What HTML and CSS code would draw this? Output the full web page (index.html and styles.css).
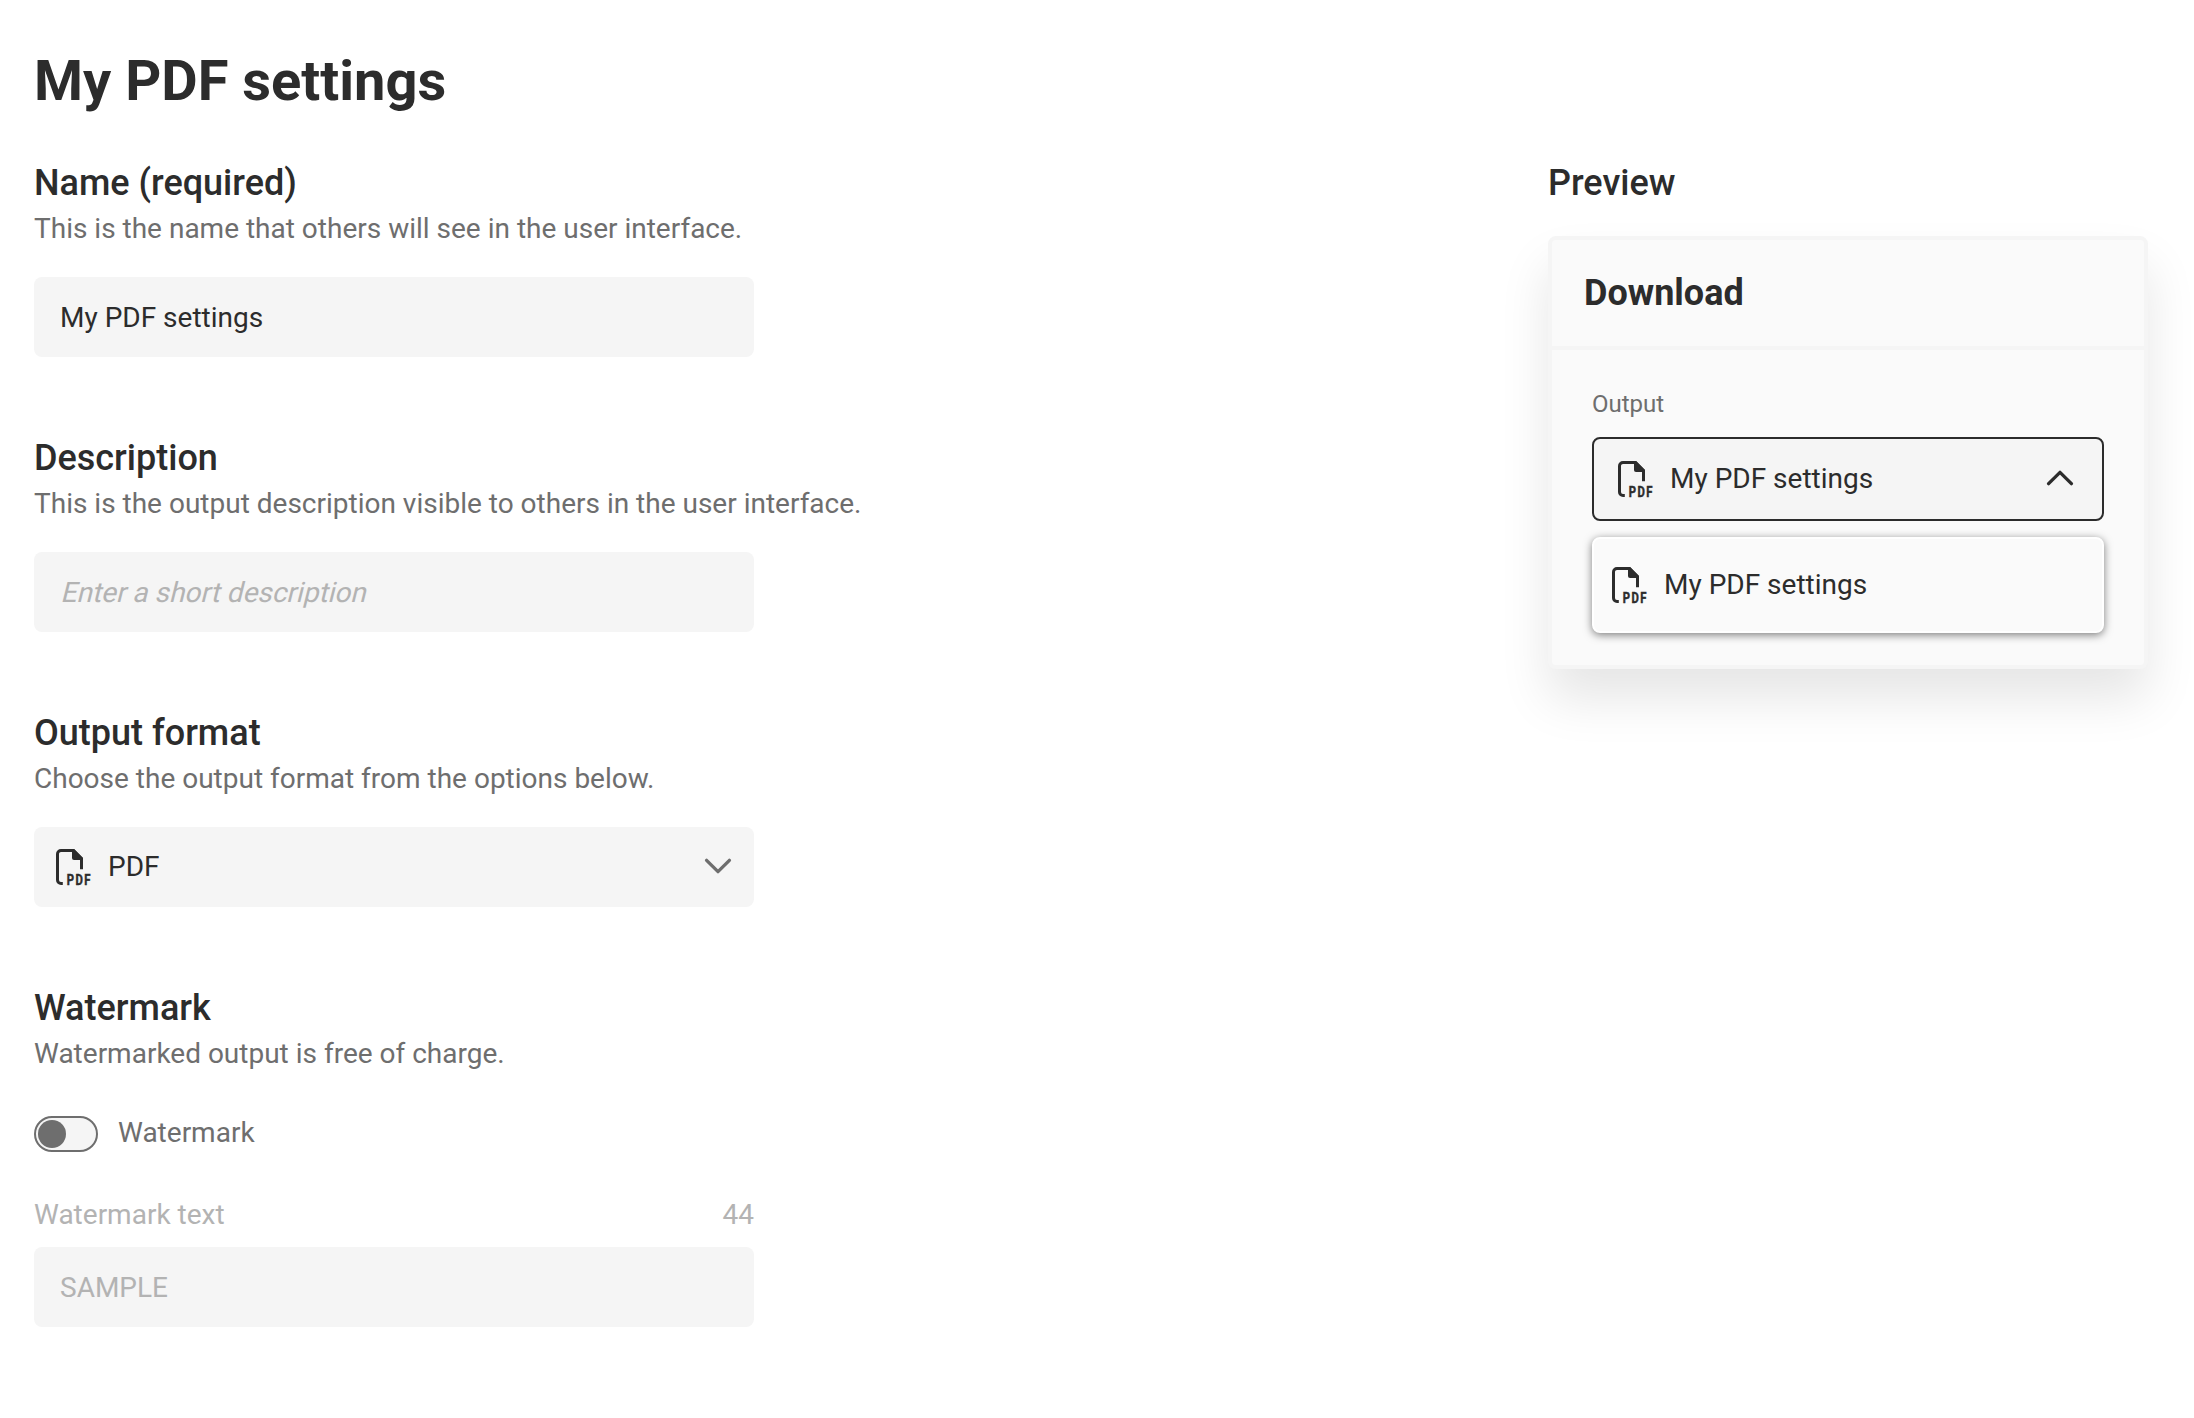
FILE: index.html
```html
<!DOCTYPE html>
<html lang="en">
<head>
<meta charset="utf-8">
<title>My PDF settings</title>
<link rel="stylesheet" href="styles.css">
</head>
<body>
<main class="page">
  <h1 class="page-title">My PDF settings</h1>
  <div class="columns">
    <form class="settings">
      <section class="section">
        <h2 class="section-title">Name (required)</h2>
        <p class="section-hint">This is the name that others will see in the user interface.</p>
        <input class="field" type="text" value="My PDF settings">
      </section>
      <section class="section">
        <h2 class="section-title">Description</h2>
        <p class="section-hint">This is the output description visible to others in the user interface.</p>
        <div class="field field-empty" role="textbox"><span class="field-placeholder">Enter a short description</span></div>
      </section>
      <section class="section">
        <h2 class="section-title">Output format</h2>
        <p class="section-hint">Choose the output format from the options below.</p>
        <div class="select">
          <svg class="icon" viewBox="0 0 36 36">
            <path class="icon-line" d="M6.800 34.500H5A3.500 3.500 0 0 1 1.500 31V5A3.500 3.500 0 0 1 5 1.500H17.500L25.500 9.500V20.300"/>
            <path class="icon-fold" d="M16 0H18L27 9V11H18A2 2 0 0 1 16 9Z"/>
            <text class="icon-text" x="10.800" y="35.800" textLength="25.200" lengthAdjust="spacingAndGlyphs">PDF</text>
          </svg>
          <span class="select-label">PDF</span>
          <svg class="chevron" viewBox="0 0 28 16"><path d="M2.600 2.300L14 13.700L25.400 2.300"/></svg>
        </div>
      </section>
      <section class="section">
        <h2 class="section-title">Watermark</h2>
        <p class="section-hint">Watermarked output is free of charge.</p>
        <div class="toggle-row">
          <span class="toggle"><span class="toggle-knob"></span></span>
          <span class="toggle-label">Watermark</span>
        </div>
        <div class="field-caption"><span>Watermark text</span><span>44</span></div>
        <input class="field field-disabled" type="text" value="SAMPLE" disabled>
      </section>
    </form>
    <aside class="preview">
      <h2 class="section-title">Preview</h2>
      <div class="card">
        <div class="card-header">Download</div>
        <div class="card-body">
          <div class="output-label">Output</div>
          <div class="select select-open">
            <svg class="icon" viewBox="0 0 36 36">
              <path class="icon-line" d="M6.800 34.500H5A3.500 3.500 0 0 1 1.500 31V5A3.500 3.500 0 0 1 5 1.500H17.500L25.500 9.500V20.300"/>
              <path class="icon-fold" d="M16 0H18L27 9V11H18A2 2 0 0 1 16 9Z"/>
              <text class="icon-text" x="10.800" y="35.800" textLength="25.200" lengthAdjust="spacingAndGlyphs">PDF</text>
            </svg>
            <span class="select-label">My PDF settings</span>
            <svg class="chevron" viewBox="0 0 28 16"><path d="M2.600 13.700L14 2.300L25.400 13.700"/></svg>
          </div>
          <div class="options">
            <svg class="icon" viewBox="0 0 36 36">
              <path class="icon-line" d="M6.800 34.500H5A3.500 3.500 0 0 1 1.500 31V5A3.500 3.500 0 0 1 5 1.500H17.500L25.500 9.500V20.300"/>
              <path class="icon-fold" d="M16 0H18L27 9V11H18A2 2 0 0 1 16 9Z"/>
              <text class="icon-text" x="10.800" y="35.800" textLength="25.200" lengthAdjust="spacingAndGlyphs">PDF</text>
            </svg>
            <span class="select-label">My PDF settings</span>
          </div>
        </div>
      </div>
    </aside>
  </div>
</main>
</body>
</html>
```
FILE: styles.css
```css
* { box-sizing: border-box; }

body {
  margin: 0;
  background: #fff;
  color: #2c2c2c;
  font-family: Roboto, "Liberation Sans", sans-serif;
  font-size: 28px;
  line-height: 42px;
}

h1, h2, p { margin: 0; }

.page { padding: 48px 46px 0 34px; }

.page-title {
  margin-bottom: 45px;
  font-size: 56px;
  line-height: 66px;
  font-weight: 700;
}

.columns {
  display: flex;
  justify-content: space-between;
  align-items: flex-start;
}

.settings {
  display: flex;
  flex-direction: column;
  gap: 77px;
}

.section-title {
  font-size: 36px;
  line-height: 48px;
  font-weight: 500;
}

.section-hint { margin: 1px 0 27px; color: #6e6e6e; }

.field {
  display: block;
  width: 720px;
  height: 80px;
  padding: 0 26px;
  border: 0;
  border-radius: 8px;
  background: #f5f5f5;
  color: #2c2c2c;
  font: inherit;
}

.field-empty { display: flex; align-items: center; padding-top: 2px; color: #b3b3b3; }

/* Slanted upright face, pivoting on the baseline */
.field-placeholder { transform: skewX(-14deg); transform-origin: 0 31px; }

.field-disabled { color: #b3b3b3; }

.select {
  display: flex;
  align-items: center;
  width: 720px;
  height: 80px;
  padding: 0 22px;
  border-radius: 8px;
  background: #f5f5f5;
}

.icon { width: 36px; height: 36px; flex: none; overflow: visible; }
.icon-line { fill: none; stroke: #2c2c2c; stroke-width: 3; }
.icon-fold { fill: #2c2c2c; }

.icon-text {
  font-family: Roboto, sans-serif;
  font-size: 15.5px;
  font-weight: 700;
  letter-spacing: 2px;
  fill: #2c2c2c;
  stroke: #2c2c2c;
  stroke-width: 0.5;
}

.select-label { flex: 1; margin-left: 16px; padding-bottom: 1px; }

.chevron {
  width: 28px;
  height: 16px;
  margin-bottom: 3px;
  fill: none;
  stroke: #6e6e6e;
  stroke-width: 3.3;
  stroke-linecap: round;
  stroke-linejoin: round;
}

.toggle-row {
  display: flex;
  align-items: center;
  gap: 20px;
  height: 42px;
  margin: 38px 0 39px;
  color: #6e6e6e;
}

.toggle {
  width: 64px;
  height: 36px;
  padding: 2px;
  border: 2px solid #6e6e6e;
  border-radius: 18px;
  background: #f5f5f5;
}

.toggle-knob {
  display: block;
  width: 28px;
  height: 28px;
  border-radius: 50%;
  background: #6e6e6e;
}

.toggle-label { padding-bottom: 3px; }

.field-caption {
  display: flex;
  justify-content: space-between;
  width: 720px;
  margin-bottom: 11px;
  color: #b3b3b3;
}

.preview { width: 600px; }

.card {
  margin-top: 29px;
  border: 4px solid #f5f5f5;
  border-radius: 8px;
  background: #fafafa;
  box-shadow: 0 30px 50px rgba(0, 0, 0, 0.1);
}

.card-header {
  height: 110px;
  padding: 0 32px;
  border-bottom: 4px solid #f5f5f5;
  font-size: 36px;
  line-height: 106px;
  font-weight: 700;
}

.card-body { padding: 36px 40px 32px; }

.output-label {
  margin-bottom: 15px;
  color: #6e6e6e;
  font-size: 24px;
  line-height: 36px;
}

.select-open {
  width: 512px;
  height: 84px;
  padding: 0 28px 0 24px;
  border: 2px solid #2c2c2c;
}

.select-open .chevron { stroke: #2c2c2c; }

.options {
  display: flex;
  align-items: center;
  width: 512px;
  height: 96px;
  margin-top: 16px;
  padding: 0 18px;
  border: 2px solid #fff;
  border-radius: 8px;
  background: #fafafa;
  box-shadow: 0 2px 8px rgba(0, 0, 0, 0.5);
}
```
